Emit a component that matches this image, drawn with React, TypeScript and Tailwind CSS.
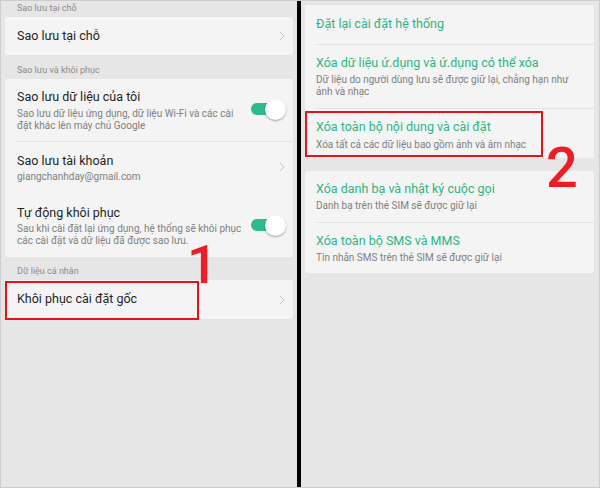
import React from "react";

function Chevron() {
  return (
    <svg width="6" height="10" viewBox="0 0 6 10" className="shrink-0">
      <polyline points="1,1 5,5 1,9" fill="none" stroke="#c4c4c4" strokeWidth="1" />
    </svg>
  );
}

function Toggle() {
  return (
    <div className="relative w-[35px] h-[21px] shrink-0">
      <div className="absolute left-0 top-[4px] w-[30px] h-[12px] rounded-full bg-[#2dbb89]" />
      <div className="absolute right-0 top-0 w-[21px] h-[21px] rounded-full bg-white shadow-[0_1px_2px_rgba(0,0,0,0.35)]" />
    </div>
  );
}

function Header({ text, h }: { text: string; h: string }) {
  return (
    <div className={`${h} flex items-end pl-[12px] pb-[4px] text-[9px] leading-[10px] text-[#8a8a8a]`}>
      {text}
    </div>
  );
}

function Sub({ lines, mt = "mt-[1px]" }: { lines: string[]; mt?: string }) {
  return (
    <div className={`${mt} text-[10px] leading-[12px] text-[#808080]`}>
      {lines.map((l) => (
        <div key={l}>{l}</div>
      ))}
    </div>
  );
}

function LeftPanel() {
  return (
    <div className="relative w-[296px] px-[4px] flex flex-col">
      <Header text="Sao lưu tại chỗ" h="h-[16px]" />
      <div className="h-[38px] bg-[#f4f4f4] rounded-[2px] flex items-center justify-between pl-[12px] pr-[8px]">
        <span className="text-[12.5px] text-[#1f1f1f]">Sao lưu tại chỗ</span>
        <Chevron />
      </div>

      <Header text="Sao lưu và khôi phục" h="h-[24px]" />
      <div className="bg-[#f4f4f4] rounded-[2px] flex flex-col">
        <div className="flex items-center justify-between pl-[12px] pr-[7px] pt-[8px] pb-[9px]">
          <div>
            <div className="text-[12.5px] leading-[20px] text-[#1f1f1f]">Sao lưu dữ liệu của tôi</div>
            <Sub lines={["Sao lưu dữ liệu ứng dụng, dữ liệu Wi-Fi và các cài", "đặt khác lên máy chủ Google"]} />
          </div>
          <Toggle />
        </div>
        <div className="ml-[12px] h-px bg-[#e3e3e3]" />
        <div className="flex items-center justify-between pl-[12px] pr-[8px] pt-[9px] pb-[10px]">
          <div>
            <div className="text-[12.5px] leading-[20px] text-[#1f1f1f]">Sao lưu tài khoản</div>
            <Sub lines={["giangchanhday@gmail.com"]} mt="mt-0" />
          </div>
          <Chevron />
        </div>
        <div className="flex items-center justify-between pl-[12px] pr-[7px] pt-[10px] pb-[10px]">
          <div>
            <div className="text-[12.5px] leading-[20px] text-[#1f1f1f]">Tự động khôi phục</div>
            <Sub lines={["Sau khi cài đặt lại ứng dụng, hệ thống sẽ khôi phục", "các cài đặt và dữ liệu đã được sao lưu."]} mt="mt-0" />
          </div>
          <Toggle />
        </div>
      </div>

      <Header text="Dữ liệu cá nhân" h="h-[23px]" />
      <div className="relative h-[39px] bg-[#f4f4f4] rounded-[2px] flex items-center justify-between pl-[12px] pr-[8px]">
        <span className="text-[12.5px] text-[#1f1f1f]">Khôi phục cài đặt gốc</span>
        <Chevron />
        <div className="absolute left-0 top-[1px] w-[194px] h-[39px] border-2 border-[#e5121b]" />
      </div>

      <div className="absolute left-[186px] top-[237px] text-[54px] leading-none font-medium text-[#ee1c24]">
        1
      </div>
    </div>
  );
}

function GreenRow({ title, lines, pt = "pt-[8px]", pb = "pb-[10px]", mt }: { title: string; lines?: string[]; pt?: string; pb?: string; mt?: string }) {
  return (
    <div className={`pl-[11px] pr-[8px] ${pt} ${pb}`}>
      <div className="text-[12.5px] leading-[20px] text-[#2db585]">{title}</div>
      {lines && <Sub lines={lines} mt={mt} />}
    </div>
  );
}

function RightPanel() {
  return (
    <div className="relative flex-1 pl-[4px] pr-[5px] pt-[4px] flex flex-col">
      <div className="bg-[#f4f4f4] rounded-[2px] flex flex-col">
        <GreenRow title="Đặt lại cài đặt hệ thống" pt="pt-[9px]" />
        <div className="ml-[11px] h-px bg-[#e3e3e3]" />
        <GreenRow
          title="Xóa dữ liệu ứ.dụng và ứ.dụng có thể xóa"
          lines={["Dữ liệu do người dùng lưu sẽ được giữ lại, chẳng hạn như", "ảnh và nhạc"]}
        />
        <div className="ml-[11px] h-px bg-[#e3e3e3]" />
        <GreenRow
          title="Xóa toàn bộ nội dung và cài đặt"
          lines={["Xóa tất cả các dữ liệu bao gồm ảnh và âm nhạc"]}
          mt="mt-[2px]"
          pb="pb-[7px]"
        />
      </div>

      <div className="mt-[13px] bg-[#f4f4f4] rounded-[2px] flex flex-col">
        <GreenRow title="Xóa danh bạ và nhật ký cuộc gọi" lines={["Danh bạ trên thẻ SIM sẽ được giữ lại"]} />
        <div className="ml-[11px] h-px bg-[#e3e3e3]" />
        <GreenRow title="Xóa toàn bộ SMS và MMS" lines={["Tin nhắn SMS trên thẻ SIM sẽ được giữ lại"]} pb="pb-[9px]" />
      </div>

      <div className="absolute left-[4px] top-[110px] w-[238px] h-[46px] border-2 border-[#e5121b]" />
      <div className="absolute left-[245px] top-[139px] text-[56px] leading-none font-medium text-[#ee1c24]">
        2
      </div>
    </div>
  );
}

export default function App() {
  return (
    <div className="w-[600px] h-[488px] flex border border-[#cdcdcd] bg-[#e6e6e6] font-['Roboto',sans-serif] overflow-hidden">
      <LeftPanel />
      <div className="w-[4px] bg-black" />
      <RightPanel />
    </div>
  );
}
